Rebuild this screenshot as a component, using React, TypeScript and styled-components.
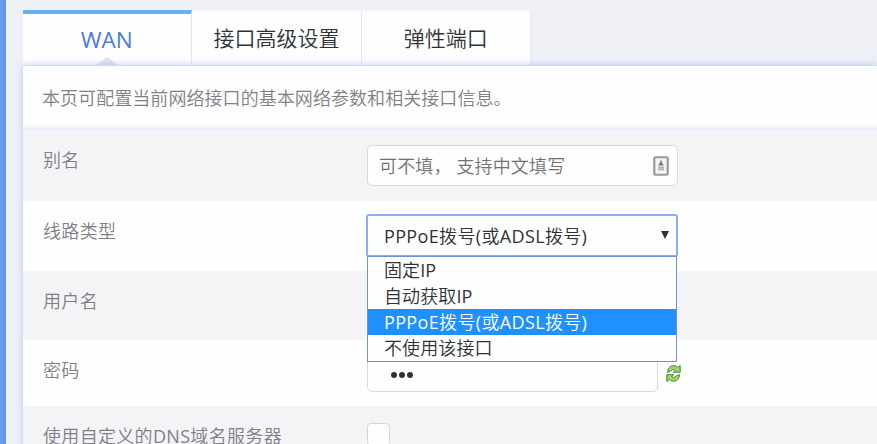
import styled, { createGlobalStyle, css } from "styled-components"

const GlobalStyle = createGlobalStyle`
    * {
        box-sizing: border-box;
    }

    body {
        margin: 0;
        overflow: hidden;
        font-family: "Open Sans", "Noto Sans CJK SC DemiLight", "Noto Sans CJK SC Light", "Noto Sans CJK SC", sans-serif;
        font-size: 18px;
        font-weight: 370;
        background-color: #f0f1f6;
    }
`

const Page = styled.div`
    display: flex;
    height: 444px;
    width: 877px;
    overflow: hidden;
`

const Sidebar = styled.div`
    flex: 0 0 6px;
    margin-right: 17px;
    background: linear-gradient(to right, #6aa0f8, #6594e8);
`

const Content = styled.div`
    flex: 1;
    min-width: 0;
    padding-top: 10px;
`

const Tabs = styled.div`
    display: flex;
    height: 55px;
`

const Tab = styled.div<{ $active?: boolean }>`
    position: relative;
    display: flex;
    justify-content: center;
    width: 169.3px;
    padding-top: 11px;
    border-top: 1px solid #f8f8fa;
    border-right: 1px solid #e6e8ef;
    background-color: #fefefe;
    color: #303236;
    font-size: 21px;
    line-height: 32px;

    ${props => props.$active && css`
        padding: 10px 1px 0 0;
        border-top: 4px solid #64b2f2;
        color: #4c7bd9;
        font-size: 22.5px;

        &::after {
            content: "";
            position: absolute;
            bottom: 0;
            left: 50%;
            margin-left: -11px;
            border: solid transparent;
            border-width: 0 11px 8px;
            border-bottom-color: #e2e6ee;
        }
    `}
`

const Panel = styled.div`
    position: relative;
    height: 400px;
    border-top: 1px solid #cfdcf0;
    background-color: #fefefe;
    box-shadow: 0 0 7px rgba(120, 160, 240, 0.5);
`

const Description = styled.div`
    height: 64px;
    padding: 19px 19px 0;
    color: #7e8085;
    line-height: 27px;
    letter-spacing: 0.06px;
    background: linear-gradient(to bottom, #fefefe 58px, #e4edfc 64px);
`

const Row = styled.div<{ $striped?: boolean, $height?: number }>`
    display: flex;
    height: ${props => props.$height || 70}px;
    padding-left: 20px;
    background-color: ${props => props.$striped ? "#f4f4f6" : "#fefefe"};
`

const Label = styled.div`
    flex: 0 0 324px;
    padding-top: 17px;
    color: #7e8085;
    line-height: 26px;
    letter-spacing: 0.32px;
    white-space: nowrap;
`

const Field = styled.div`
    position: relative;
    display: flex;
    align-items: flex-start;
    padding-top: 15px;
`

const Box = styled.div<{ $width: number, $height?: number }>`
    display: flex;
    align-items: center;
    justify-content: space-between;
    width: ${props => props.$width}px;
    height: ${props => props.$height || 41}px;
    padding: 0 8px 0 11px;
    border: 1px solid #d8d9db;
    border-radius: 5px;
    background-color: #fefefe;
    color: #707276;
`

const Placeholder = styled.span`
    padding-bottom: 2px;
    letter-spacing: 0.15px;
`

const SelectBox = styled(Box)`
    height: 43px;
    margin: -2px 0 0 -1px;
    padding: 0 7px 1px 16px;
    border: 2px solid #87aff5;
    border-radius: 3px;
    color: #303236;
    letter-spacing: 0.35px;
`

const Arrow = styled.span`
    margin-top: -1px;
    border: solid transparent;
    border-width: 8px 4.5px 0;
    border-top-color: #303236;
`

const Options = styled.div`
    position: absolute;
    top: 55px;
    left: 0;
    z-index: 1;
    width: 310px;
    border: 1px solid #6e94d6;
    background-color: #fefefe;
    color: #303236;
`

const Option = styled.div<{ $selected?: boolean }>`
    height: 26px;
    padding-left: 16px;
    line-height: 26px;
    letter-spacing: 0.1px;
    white-space: nowrap;

    ${props => props.$selected && css`
        background-color: #1e90ff;
        color: #fefefe;
        letter-spacing: 0.35px;
    `}
`

const Dots = styled.span`
    display: flex;
    gap: 2px;
    margin: 3px 0 0 12px;

    &::before,
    &::after,
    i {
        content: "";
        width: 6px;
        height: 6px;
        border-radius: 50%;
        background-color: #303238;
    }
`

const RefreshIcon = styled.svg`
    margin: 10px 0 0 8px;
`

const Checkbox = styled.div`
    width: 23px;
    height: 23px;
    margin-top: 2px;
    border: 1px solid #d5d6d8;
    border-radius: 4px;
    background-color: #fefefe;
`

const options = ["固定IP", "自动获取IP", "PPPoE拨号(或ADSL拨号)", "不使用该接口"]
const selected = options[2]

const ContactIcon = () => (
    <svg width="16" height="20" viewBox="0 0 16 20">
        <rect x="1.25" y="1.25" width="13.5" height="17.5" rx="1" fill="#f4f4f4" stroke="#98999b" strokeWidth="2.2" />
        <path d="M8 3.7l1.3 3.2 1.5 2.6H5.2l1.5-2.6z" fill="#77797b" />
        <path d="M5 11.5h6M5 13.7h6" stroke="#b2b3b4" strokeWidth="1.8" />
    </svg>
)

const Refresh = () => (
    <RefreshIcon width="15" height="17" viewBox="0 0 15 17">
        <path d="M1.6 7.4C1.6 3 4.2.7 7.4.7c2 0 3.2.6 4.2 1.7L14.2.5v6.8H7.3l2-2C7.4 4 5.6 4.8 4.6 6.2z" fill="#9bd36c" stroke="#4b8b2d" />
        <path d="M13.4 9.6c0 4.4-2.6 6.7-5.8 6.7-2 0-3.2-.6-4.2-1.7L.8 16.5V9.7h6.9l-2 2c1.9 1.3 3.7.5 4.7-.9z" fill="#9bd36c" stroke="#4b8b2d" />
    </RefreshIcon>
)

const App = () => {
    return (
        <Page>
            <GlobalStyle />
            <Sidebar />
            <Content>
                <Tabs>
                    <Tab $active>WAN</Tab>
                    <Tab>接口高级设置</Tab>
                    <Tab>弹性端口</Tab>
                </Tabs>
                <Panel>
                    <Description>本页可配置当前网络接口的基本网络参数和相关接口信息。</Description>
                    <Row $striped $height={71}>
                        <Label>别名</Label>
                        <Field>
                            <Box $width={311}>
                                <Placeholder>可不填， 支持中文填写</Placeholder>
                                <ContactIcon />
                            </Box>
                        </Field>
                    </Row>
                    <Row>
                        <Label>线路类型</Label>
                        <Field>
                            <SelectBox $width={312}>
                                {selected}
                                <Arrow />
                            </SelectBox>
                            <Options>
                                {options.map(option => (
                                    <Option key={option} $selected={option === selected}>{option}</Option>
                                ))}
                            </Options>
                        </Field>
                    </Row>
                    <Row $striped $height={69}>
                        <Label>用户名</Label>
                    </Row>
                    <Row $height={66}>
                        <Label>密码</Label>
                        <Field>
                            <Box $width={291} $height={37}>
                                <Dots><i /></Dots>
                            </Box>
                            <Refresh />
                        </Field>
                    </Row>
                    <Row $striped>
                        <Label>使用自定义的DNS域名服务器</Label>
                        <Field>
                            <Checkbox />
                        </Field>
                    </Row>
                </Panel>
            </Content>
        </Page>
    )
}

export default App
